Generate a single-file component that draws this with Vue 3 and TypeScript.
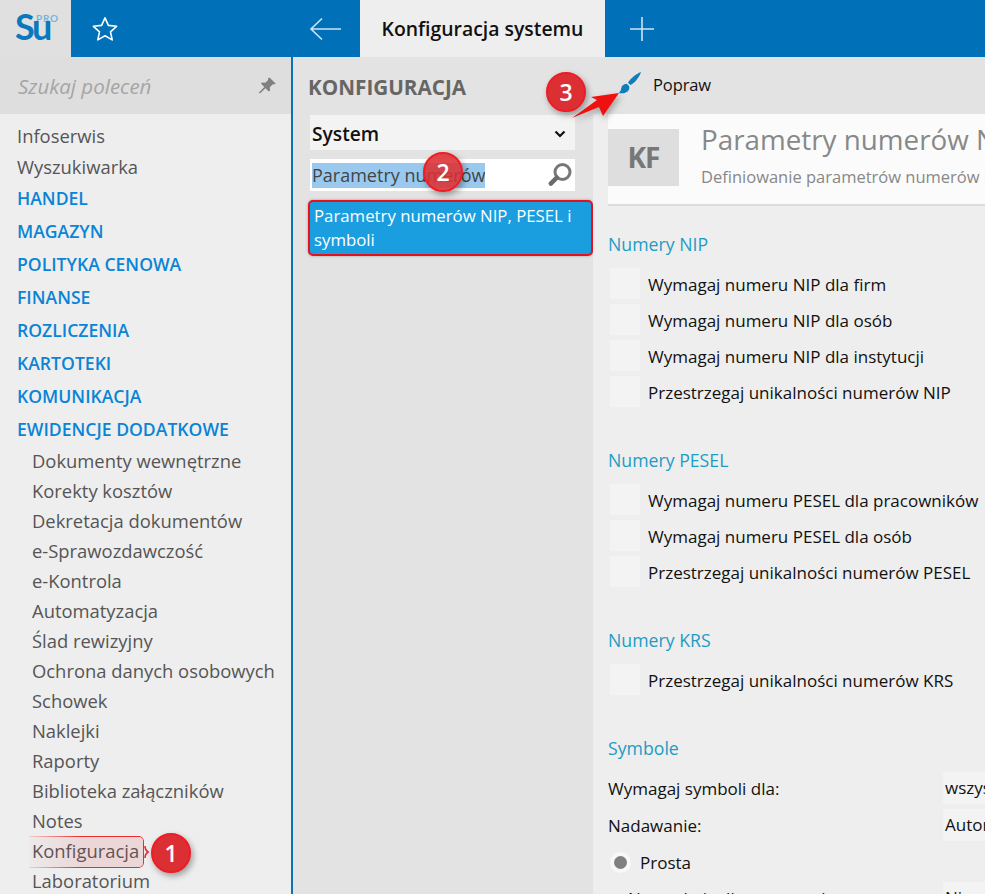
<script setup lang="ts">
const top = ['Infoserwis', 'Wyszukiwarka']
const cats = ['HANDEL', 'MAGAZYN', 'POLITYKA CENOWA', 'FINANSE', 'ROZLICZENIA', 'KARTOTEKI', 'KOMUNIKACJA', 'EWIDENCJE DODATKOWE']
const subs = ['Dokumenty wewnętrzne', 'Korekty kosztów', 'Dekretacja dokumentów', 'e-Sprawozdawczość', 'e-Kontrola', 'Automatyzacja', 'Ślad rewizyjny', 'Ochrona danych osobowych', 'Schowek', 'Naklejki', 'Raporty', 'Biblioteka załączników', 'Notes', 'Konfiguracja', 'Laboratorium']
const sections = [
  { title: 'Numery NIP', rows: ['Wymagaj numeru NIP dla firm', 'Wymagaj numeru NIP dla osób', 'Wymagaj numeru NIP dla instytucji', 'Przestrzegaj unikalności numerów NIP'] },
  { title: 'Numery PESEL', rows: ['Wymagaj numeru PESEL dla pracowników', 'Wymagaj numeru PESEL dla osób', 'Przestrzegaj unikalności numerów PESEL'] },
  { title: 'Numery KRS', rows: ['Przestrzegaj unikalności numerów KRS'] }
]
</script>

<template>
  <div class="app">
    <header class="topbar">
      <div class="logo">
        <span class="su">S</span>
        <div class="logo-col"><span class="pro">PRO</span><span class="u">u</span></div>
      </div>
      <div class="fav">
        <svg width="28" height="28" viewBox="0 0 28 28" fill="none" stroke="#fff" stroke-width="1.6" stroke-linejoin="round"><path d="M14 2.8l3.4 7.6 8.2.9-6.1 5.500 1.700 8.100L14 20.800l-7.200 4.100 1.700-8.100-6.100-5.500 8.200-.9z"/></svg>
      </div>
      <div class="back">
        <svg width="34" height="24" viewBox="0 0 34 24" fill="none" stroke="#cfe3f2" stroke-width="1.6"><path d="M32 12H2M13 1.500L2 12l11 10.500"/></svg>
      </div>
      <div class="tab">Konfiguracja systemu</div>
      <div class="plus">
        <svg width="26" height="26" viewBox="0 0 26 26" stroke="#cfe3f2" stroke-width="1.6"><path d="M13 1v24M1 13h24"/></svg>
      </div>
    </header>

    <div class="main">
      <aside class="side">
        <div class="cmd">
          <span>Szukaj poleceń</span>
          <svg width="20" height="20" viewBox="0 0 20 20" fill="#808080"><path d="M12.400 1.400l6.200 6.200-1.500 1-1.300-.4-3 3 .3 3.200-1.200 1.200-3.400-3.400-5.600 5.400-1-1 5.400-5.600-3.400-3.400 1.200-1.200 3.200.3 3-3-.4-1.300z"/></svg>
        </div>
        <nav class="menu">
          <div v-for="t in top" :key="t" class="plain">{{ t }}</div>
          <div class="cats">
            <div v-for="c in cats" :key="c" class="cat">{{ c }}</div>
          </div>
          <div class="subs">
            <div v-for="s in subs" :key="s" class="sub">{{ s }}</div>
          </div>
        </nav>
      </aside>

      <section class="mid">
        <h2>KONFIGURACJA</h2>
        <div class="select">
          <span>System</span>
          <svg width="12" height="8" viewBox="0 0 12 8" fill="none" stroke="#111" stroke-width="2.200"><path d="M1.500 1.500L6 6l4.500-4.500"/></svg>
        </div>
        <div class="search">
          <span class="sel">Parametry numerów</span>
          <svg width="26" height="26" viewBox="0 0 26 26" fill="none"><circle cx="15.500" cy="10" r="7.500" stroke="#777" stroke-width="3"/><path d="M9.800 15.600L3.800 21.600" stroke="#6b6b6b" stroke-width="4.500" stroke-linecap="round"/></svg>
        </div>
        <div class="result">Parametry numerów NIP, PESEL i symboli</div>
      </section>

      <section class="right">
        <div class="toolbar">
          <svg width="24" height="24" viewBox="0 0 24 24"><path d="M23 1C18 3 12.500 7.200 10 11.800l2.500 2.200C17.200 11.500 21.200 6.300 23 1z" fill="#0f7db8"/><path d="M8.800 12.800C5.500 13 3.400 15 3.200 17.500 3 19.300 2.200 20.800.8 22c3.600.9 8.200.2 10-3 .8-1.500.8-3 0-4.300z" fill="#0f7db8"/></svg>
          <span>Popraw</span>
        </div>
        <div class="content">
          <div class="card">
            <div class="kf">KF</div>
            <div class="card-text">
              <div class="title">Parametry numerów NIP, PESEL i symboli</div>
              <div class="desc">Definiowanie parametrów numerów NIP, PESEL i symboli</div>
            </div>
          </div>
          <div v-for="s in sections" :key="s.title" class="sec">
            <h3>{{ s.title }}</h3>
            <label v-for="r in s.rows" :key="r" class="row"><i class="cb"></i><span>{{ r }}</span></label>
          </div>
          <div class="sec sym">
            <h3>Symbole</h3>
            <div class="field"><span>Wymagaj symboli dla:</span><b>wszystkich</b></div>
            <div class="field"><span>Nadawanie:</span><b>Automatycznie</b></div>
            <div class="radio"><i><u></u></i><span>Prosta</span></div>
            <div class="field last"><span class="ind">Numerkuj tylko w ramach</span><b>Nie</b></div>
          </div>
        </div>
      </section>
    </div>

    <div class="ann konf"></div>
    <svg class="ann tip" width="8" height="12" viewBox="0 0 8 12" fill="none" stroke="#ee2a2e" stroke-width="1.500"><path d="M1 0c0 3 .5 4.500 3 6-2.500 1.500-3 3-3 6"/></svg>
    <div class="ann badge b1">1</div>
    <div class="ann badge b2">2</div>
    <div class="ann badge b3">3</div>
    <svg class="ann arrow" width="50" height="30" viewBox="0 0 50 30"><path d="M1 28L26 10 20 7 48 3 32 26 28 17z" fill="#f01010"/></svg>
  </div>
</template>

<style>
html, body { margin: 0; overflow: hidden; }
</style>

<style scoped>
.app { position: relative; width: 985px; height: 894px; overflow: hidden; font-family: "Open Sans", "Noto Sans", sans-serif; background: #eee; color: #111; }
.topbar { display: flex; height: 57px; background: #0070b8; }
.logo { display: flex; width: 71px; box-sizing: border-box; padding: 8px 0 0 15px; background: #e0e0e0; flex: none; font-family: Lato, sans-serif; color: #0a78bd; }
.su { font-size: 36px; line-height: 36px; font-weight: 700; width: 20px; }
.logo-col { display: flex; flex-direction: column; }
.pro { font-size: 10px; line-height: 10px; margin: 5px 0 0 1px; font-weight: 700; letter-spacing: .8px; color: #77b4dc; }
.u { font-size: 36px; line-height: 14px; font-weight: 700; margin-top: -4px; margin-left: -3px; }
.fav { width: 68px; display: flex; align-items: center; justify-content: center; }
.back { width: 221px; display: flex; align-items: center; justify-content: flex-end; padding-right: 17px; box-sizing: border-box; }
.tab { width: 245px; background: #eee; font-size: 19.400px; font-weight: 600; line-height: 57px; text-align: center; color: #111; }
.plus { width: 73px; display: flex; align-items: center; justify-content: center; }
.main { display: flex; height: 837px; }
.side { width: 293px; flex: none; box-sizing: border-box; border-right: 2px solid #0b72b5; background: #eee; }
.cmd { height: 57px; background: #dedede; display: flex; align-items: center; justify-content: space-between; padding: 0 14px 0 18px; font-size: 20.500px; font-style: italic; color: #a5a5a5; }
.menu { padding: 6px 0 0 17px; font-size: 18.400px; color: #555; white-space: nowrap; }
.plain { height: 31px; line-height: 31px; }
.cats { margin-top: 1px; }
.cat { height: 33px; line-height: 31px; font-size: 17.600px; color: #0a84d6; font-weight: 600; }
.subs { margin-top: -1px; }
.sub { height: 30px; line-height: 30px; padding-left: 15px; }
.mid { width: 300px; flex: none; box-sizing: border-box; background: #e3e3e3; padding-top: 17px; }
.mid h2 { margin: 0 0 15px 15px; font-size: 20.700px; line-height: 26px; font-weight: 700; color: #666; }
.select { margin-left: 17px; width: 265px; height: 35px; box-sizing: border-box; background: #f3f3f3; display: flex; align-items: center; justify-content: space-between; padding: 2px 9px 0 2px; font-size: 19.200px; font-weight: 600; color: #111; }
.search { margin: 9px 0 9px 17px; width: 265px; height: 32px; box-sizing: border-box; background: #fff; display: flex; align-items: center; justify-content: space-between; padding: 0 2px; }
.sel { background: #99c9ef; font-size: 18px; line-height: 25px; color: #444; width: 173px; white-space: nowrap; overflow: hidden; }
.result { margin-left: 15px; width: 285px; height: 56px; box-sizing: border-box; background: #1a9ee0; border: 2px solid #e8101c; border-radius: 5px; box-shadow: 0 0 3px rgba(0,0,0,.3); padding: 2px 4px; color: #fff; font-size: 16.800px; line-height: 24px; }
.right { flex: 1; min-width: 0; display: flex; flex-direction: column; }
.toolbar { height: 57px; flex: none; background: #e3e3e3; display: flex; align-items: center; padding-left: 25px; gap: 11px; font-size: 16.500px; }
.toolbar svg { margin-top: -5px; }
.toolbar span { margin-top: -2px; letter-spacing: -.1px; }
.content { flex: 1; background: #eee; padding-left: 15px; white-space: nowrap; overflow: hidden; }
.card { height: 92px; box-sizing: border-box; background: #fbfbfb; border-bottom: 2px solid #dcdcdc; display: flex; align-items: flex-start; padding-top: 15px; gap: 22px; }
.kf { width: 71px; height: 57px; flex: none; background: #dedede; color: #777; font-size: 28px; font-weight: 700; line-height: 57px; text-align: center; letter-spacing: -1px; }
.title { font-size: 27.800px; line-height: 24px; margin-top: -2px; color: #888; }
.desc { font-size: 16.500px; line-height: 24px; margin-top: 14px; color: #888; }
.sec { padding-top: 26px; }
.sec + .sec { padding-top: 39px; }
.sec h3 { margin: 0 0 9px; font-size: 17.700px; font-weight: 400; line-height: 24px; color: #1d9cc4; }
.row { display: flex; align-items: center; height: 36px; gap: 8px; padding-left: 2px; font-size: 17px; color: #111; }
.row span { margin-top: 2px; }
.cb { width: 30px; height: 31px; background: #f3f3f3; display: block; flex: none; }
.sym h3 { margin-bottom: 12px; }
.field { display: flex; height: 32px; margin-bottom: 5px; font-size: 17px; align-items: center; }
.field span { width: 335px; flex: none; }
.field b { font-weight: 400; flex: 1; height: 32px; line-height: 32px; background: #f3f3f3; padding-left: 2px; }
.field .ind { padding-left: 20px; box-sizing: border-box; }
.radio { display: flex; align-items: center; height: 36px; margin: -2px 0 2px; font-size: 17px; padding-left: 2px; gap: 9px; }
.radio i { width: 21px; height: 21px; border-radius: 50%; background: #f8f8f8; display: flex; align-items: center; justify-content: center; }
.radio u { width: 13px; height: 13px; border-radius: 50%; background: #808080; display: block; }
.ann { position: absolute; }
.konf { left: 29px; top: 836px; width: 115px; height: 32px; box-sizing: border-box; border: 1.500px solid #ee2a2e; border-left: 0; border-radius: 0 5px 5px 0; background: rgba(220,60,70,.13); -webkit-mask-image: linear-gradient(90deg, rgba(0,0,0,.15), #000 45%); mask-image: linear-gradient(90deg, rgba(0,0,0,.15), #000 45%); }
.tip { left: 144px; top: 846px; }
.badge { width: 40px; height: 40px; box-sizing: border-box; border: 2px solid #ee1c25; border-radius: 50%; background: #dc2f33; color: #fff; font-size: 23px; font-weight: 600; line-height: 36px; text-align: center; box-shadow: 2px 3px 6px rgba(0,0,0,.35); }
.b1 { left: 151px; top: 833px; }
.b2 { left: 423px; top: 152px; background: rgba(220,47,51,.88); }
.b3 { left: 546px; top: 72px; }
.arrow { left: 571px; top: 90px; filter: drop-shadow(2px 3px 3px rgba(0,0,0,.3)); }
</style>
